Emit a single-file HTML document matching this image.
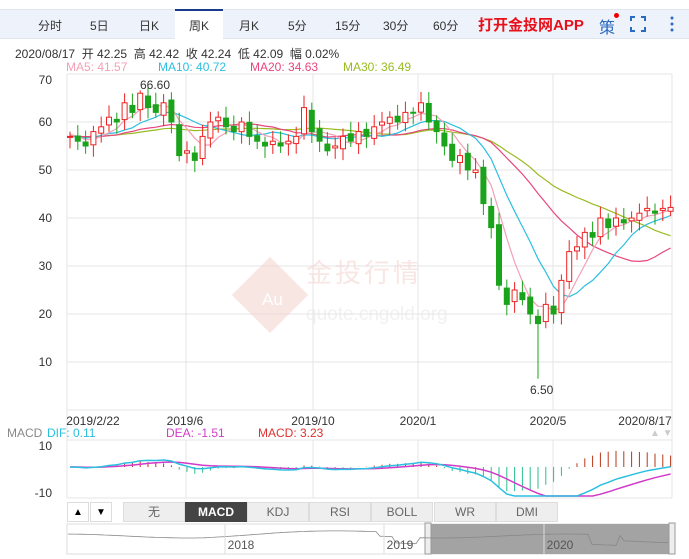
<!DOCTYPE html>
<html><head><meta charset="utf-8"><style>
body{margin:0;width:689px;height:559px;background:#fff;font-family:"Liberation Sans","Noto Sans CJK SC",sans-serif;overflow:hidden;position:relative}
.tabs{position:absolute;left:0;top:9px;width:689px;height:28px;background:#eef3fb;border-top:1px solid #dfe6f0;border-bottom:1px solid #dfe6f0}
.t{position:absolute;top:7px;font-size:12px;color:#333}
.act{position:absolute;left:175px;top:-1px;width:48px;height:30px;background:#fff;border-top:2px solid #1a3a8a;box-sizing:border-box}
.abs{position:absolute;white-space:nowrap}
.btn{position:absolute;top:502px;height:20px;width:62px;background:#eee;border:1px solid #ddd;box-sizing:border-box;font-size:12px;color:#666;text-align:center;line-height:19px}
</style></head><body>
<div class="tabs">
<div class="act"></div>
<span class="t" style="left:38px">分时</span><span class="t" style="left:90px">5日</span>
<span class="t" style="left:139px">日K</span><span class="t" style="left:189px">周K</span>
<span class="t" style="left:239px">月K</span><span class="t" style="left:288px">5分</span>
<span class="t" style="left:335px">15分</span><span class="t" style="left:383px">30分</span>
<span class="t" style="left:433px">60分</span>
<span class="t" style="left:478px;top:4px;font-size:15px;font-weight:bold;color:#e8101a">打开金投网APP</span>
<span class="t" style="left:599px;top:4px;font-size:16px;color:#2a6ac0">策</span>
<span class="abs" style="left:614px;top:3px;width:5px;height:5px;border-radius:50%;background:#e00"></span>
<svg class="abs" style="left:630px;top:6px" width="16" height="16"><path d="M1 5V1h4M11 1h4v4M15 11v4h-4M5 15H1v-4" stroke="#2a6ac0" stroke-width="2" fill="none"/></svg>
<svg class="abs" style="left:669px;top:5px" width="6" height="18"><circle cx="3" cy="3" r="1.5" fill="#2a6ac0"/><circle cx="3" cy="9" r="1.5" fill="#2a6ac0"/><circle cx="3" cy="15" r="1.5" fill="#2a6ac0"/></svg>
</div>
<div class="abs" style="left:15px;top:45px;font-size:12px;color:#333">2020/08/17 &nbsp;开 42.25 &nbsp;高 42.42 &nbsp;收 42.24 &nbsp;低 42.09 &nbsp;幅 0.02%</div>
<div class="abs" style="left:66px;top:60px;font-size:12px;color:#f4a0b6">MA5: 41.57</div>
<div class="abs" style="left:158px;top:60px;font-size:12px;color:#2bbfe0">MA10: 40.72</div>
<div class="abs" style="left:250px;top:60px;font-size:12px;color:#e8467c">MA20: 34.63</div>
<div class="abs" style="left:343px;top:60px;font-size:12px;color:#99bb22">MA30: 36.49</div>
<svg id="s" class="abs" style="left:0;top:0" width="689" height="559"></svg>
<div class="abs" style="left:7px;top:426px;font-size:12px;color:#888">MACD</div>
<div class="abs" style="left:47px;top:426px;font-size:12px;color:#2bbfe0">DIF: 0.11</div>
<div class="abs" style="left:166px;top:426px;font-size:12px;color:#d23bc8">DEA: -1.51</div>
<div class="abs" style="left:258px;top:426px;font-size:12px;color:#e03030">MACD: 3.23</div>
<div class="abs" style="left:650px;top:428px;font-size:10px;color:#ccc">▲ ▼</div>
<div class="btn" style="left:67px;width:22px;background:#fff;color:#000;font-size:10px">▲</div>
<div class="btn" style="left:90px;width:22px;background:#fff;color:#000;font-size:10px">▼</div>
<div class="btn" style="left:123px">无</div>
<div class="btn" style="left:185px;background:#444;color:#fff;font-weight:bold;border-color:#444">MACD</div>
<div class="btn" style="left:247px">KDJ</div>
<div class="btn" style="left:309px">RSI</div>
<div class="btn" style="left:371px">BOLL</div>
<div class="btn" style="left:434px">WR</div>
<div class="btn" style="left:496px">DMI</div>
<script>
const S=document.getElementById('s');let h='';
const L=67,R=672;
[74,122,170,218,266,314,362,410].forEach(y=>h+=`<line x1="${L}" x2="${R}" y1="${y}" y2="${y}" stroke="#e6e6e6"/>`);
[186,313,418,553].forEach(x=>h+=`<line x1="${x}" x2="${x}" y1="74" y2="410" stroke="#e6e6e6"/><line x1="${x}" x2="${x}" y1="440" y2="498" stroke="#e6e6e6"/>`);
h+=`<line x1="${L}" x2="${L}" y1="74" y2="498" stroke="#e6e6e6"/><line x1="${R}" x2="${R}" y1="74" y2="498" stroke="#e6e6e6"/>`;
h+=`<line x1="${L}" x2="${R}" y1="498" y2="498" stroke="#e6e6e6"/><line x1="${L}" x2="${R}" y1="440" y2="440" stroke="#e6e6e6"/>`;
[[70,80],[60,122],[50,170],[40,218],[30,266],[20,314],[10,362]].forEach(a=>h+=`<text x="52" y="${a[1]+4}" font-size="12" fill="#333" text-anchor="end" font-family="Liberation Sans">${a[0]}</text>`);
[['2019/2/22',93],['2019/6',185],['2019/10',313],['2020/1',418],['2020/5',548],['2020/8/17',645]].forEach(a=>h+=`<text x="${a[1]}" y="425" font-size="12" fill="#333" text-anchor="middle" font-family="Liberation Sans">${a[0]}</text>`);
[['10',450],['-10',497]].forEach(a=>h+=`<text x="52" y="${a[1]}" font-size="12" fill="#333" text-anchor="end" font-family="Liberation Sans">${a[0]}</text>`);
h+=`<g opacity="0.55"><rect x="243" y="268" width="54" height="54" transform="rotate(45 270 295)" fill="#f3d3cd"/><text x="262" y="305" font-size="17" fill="#fff" font-family="Liberation Sans">Au</text>
<text x="306" y="282" font-size="26" fill="#f3d3cd" font-family="Noto Sans CJK SC" letter-spacing="3">金投行情</text>
<text x="306" y="320" font-size="19" fill="#e6e6e6" font-family="Liberation Sans">quote.cngold.org</text></g>`;
const C=[57,56,55,58,59,61,60,64,62,66,63,62,64,60,53,54,52,57,60,61,59,58,60,57,56,55,56,55,56,57,63,58,56,54,55,57,56,58,57,59,60,61,60,62,62,64,60,58,55,52,53,50,50,43,38,26,22,25,23,20,18,22,20,27,33,34,37,36,40,38,40,39,40,41,42,41,42,42.2];
const Y=v=>122+(60-v)*4.8, X=i=>70+i*7.8;
const pre=[];for(let i=0;i<30;i++)pre.push(57+Math.sin(i)*1.5);
const all=pre.concat(C);
function ma(n,col){let p='';C.forEach((c,i)=>{let k=i+30,s=0;for(let j=0;j<n;j++)s+=all[k-j];p+=(i?'L':'M')+X(i).toFixed(1)+' '+Y(s/n).toFixed(1)});h+=`<path d="${p}" fill="none" stroke="${col}" stroke-width="1.2"/>`;}
ma(30,'#99bb22');ma(20,'#e8467c');ma(10,'#2bbfe0');ma(5,'#f4a0b6');
C.forEach((c,i)=>{let o=i?C[i-1]+(Math.sin(i*3)*0.6):57;let hi=Math.max(o,c)+1+Math.abs(Math.sin(i))*1.5,lo=Math.min(o,c)-1-Math.abs(Math.cos(i))*1.5;
if(i==9)hi=66.6;if(i==60)lo=6.5;const up=c>=o,col=up?'#ee2222':'#1ba31b',x=X(i);
h+=`<line x1="${x}" x2="${x}" y1="${Y(hi)}" y2="${Y(lo)}" stroke="${col}"/>`;
const t=Y(Math.max(o,c)),b=Y(Math.min(o,c));h+=`<rect x="${x-2.5}" y="${t}" width="5" height="${Math.max(1,b-t)}" fill="${up?'#fff':col}" stroke="${col}" stroke-width="1"/>`;});
h+=`<text x="140" y="89" font-size="12" fill="#333" font-family="Liberation Sans">66.60</text><text x="530" y="394" font-size="12" fill="#333" font-family="Liberation Sans">6.50</text>`;
let e12=57,e26=57,dea=0,dp='',ep='';const Z=467,k=4;
all.forEach((c,i)=>{e12=e12*11/13+c*2/13;e26=e26*25/27+c*2/27;const dif=e12-e26;dea=dea*0.8+dif*0.2;
if(i>=30){const j=i-30,x=X(j);const m=(dif-dea)*2;const col=m>=0?'#b8361a':'#2ac08a';
let hy=Math.max(443,Math.min(497,Z-m*k*0.8));
h+=`<line x1="${x}" x2="${x}" y1="${Z}" y2="${hy}" stroke="${col}"/>`;
dp+=(j?'L':'M')+x+' '+Math.min(496,Z-dif*k).toFixed(1);ep+=(j?'L':'M')+x+' '+Math.min(496,Z-dea*k).toFixed(1);}});
h+=`<path d="${ep}" fill="none" stroke="#d23bc8" stroke-width="1.5"/><path d="${dp}" fill="none" stroke="#2bbfe0" stroke-width="1.5"/>`;
h+=`<rect x="67" y="524" width="605" height="30" fill="#fff" stroke="#ddd"/><rect x="428" y="524" width="244" height="30" fill="#a3a3a3"/>
<rect x="425" y="523" width="6" height="31" fill="#eee" stroke="#999"/><rect x="669" y="523" width="6" height="31" fill="#eee" stroke="#999"/>`;
let np='';for(let x=68;x<=670;x+=4){let v=536-Math.sin(x/40)*2-(x>200&&x<380?(x-200)/40:0)+(x>395&&x<420?6:0)+(x>590&&x<620?10:0)+(x>620?5:0);np+=(x==68?'M':'L')+x+' '+v.toFixed(1);}
h+=`<path d="${np}" fill="none" stroke="#888" stroke-width="0.8"/>`;
[[241,'2018'],[400,'2019'],[560,'2020']].forEach(a=>h+=`<line x1="${a[0]-16}" x2="${a[0]-16}" y1="524" y2="554" stroke="#ddd"/><text x="${a[0]}" y="549" font-size="12" fill="#555" text-anchor="middle" font-family="Liberation Sans">${a[1]}</text>`);
S.innerHTML=h;
</script>
</body></html>
